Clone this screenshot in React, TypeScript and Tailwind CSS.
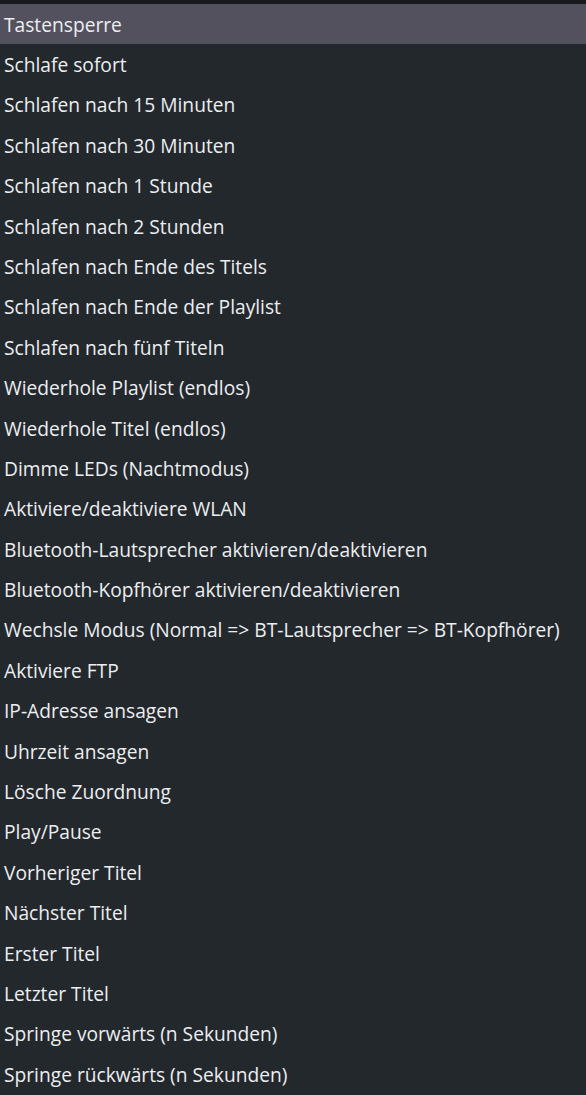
const items = [
  "Tastensperre",
  "Schlafe sofort",
  "Schlafen nach 15 Minuten",
  "Schlafen nach 30 Minuten",
  "Schlafen nach 1 Stunde",
  "Schlafen nach 2 Stunden",
  "Schlafen nach Ende des Titels",
  "Schlafen nach Ende der Playlist",
  "Schlafen nach fünf Titeln",
  "Wiederhole Playlist (endlos)",
  "Wiederhole Titel (endlos)",
  "Dimme LEDs (Nachtmodus)",
  "Aktiviere/deaktiviere WLAN",
  "Bluetooth-Lautsprecher aktivieren/deaktivieren",
  "Bluetooth-Kopfhörer aktivieren/deaktivieren",
  "Wechsle Modus (Normal => BT-Lautsprecher => BT-Kopfhörer)",
  "Aktiviere FTP",
  "IP-Adresse ansagen",
  "Uhrzeit ansagen",
  "Lösche Zuordnung",
  "Play/Pause",
  "Vorheriger Titel",
  "Nächster Titel",
  "Erster Titel",
  "Letzter Titel",
  "Springe vorwärts (n Sekunden)",
  "Springe rückwärts (n Sekunden)",
];

export default function App() {
  return (
    <div
      className="h-[1095px] w-[586px] overflow-hidden border-t-4 border-[#17191c] bg-[#23282d] text-[#eceef0]"
      style={{ fontFamily: '"Open Sans", "Noto Sans", sans-serif' }}
    >
      <ul className="flex flex-col">
        {items.map((item, i) => (
          <li
            key={item}
            className={
              i === 0
                ? "flex h-[40.4px] items-center whitespace-nowrap bg-[#53515e] pl-1 text-[19.2px] leading-none"
                : "flex h-[40.4px] items-center whitespace-nowrap pl-1 text-[19.2px] leading-none"
            }
          >
            {item}
          </li>
        ))}
      </ul>
    </div>
  );
}
